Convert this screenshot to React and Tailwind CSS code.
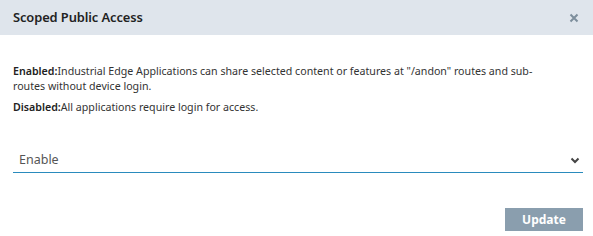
export default function App() {
    return (
        <div className="w-[593px] h-[236px] bg-white flex flex-col" style={{ fontFamily: '"Noto Sans", "Open Sans", sans-serif' }}>
            {/* Header */}
            <div className="h-[35px] bg-[#dfe5ec] flex items-center justify-between pl-[13px] pr-[14px]">
                <h1 className="text-[12.9px] font-semibold text-[#222] tracking-[-0.1px]">Scoped Public Access</h1>
                <svg className="w-[10px] h-[10px]" viewBox="0 0 10 10" fill="none" stroke="#7d8e9c" strokeWidth="2">
                    <path d="M1.5 1.5 L8.5 8.5 M8.5 1.5 L1.5 8.5" />
                </svg>
            </div>

            {/* Body */}
            <div className="pl-[13px] pr-[30px] pt-[29px] text-[10.65px] text-[#333] leading-[15px]">
                <p>
                    <span className="font-semibold text-[#222]">Enabled:</span>Industrial Edge Applications can share selected content or features at "/andon" routes and sub-routes without device login.
                </p>
                <p className="mt-[6px]">
                    <span className="font-semibold text-[#222]">Disabled:</span>All applications require login for access.
                </p>
            </div>

            {/* Select */}
            <div className="ml-[13px] mr-[10px] mt-[33px] h-[25px] border-b border-[#2a8bbd] flex items-center justify-between pl-[6px] pr-[3px]">
                <span className="text-[12.5px] text-[#555]">Enable</span>
                <svg className="w-[10px] h-[7px]" viewBox="0 0 10 7" fill="none" stroke="#444" strokeWidth="2">
                    <path d="M1.5 1.5 L5 5 L8.5 1.5" />
                </svg>
            </div>

            {/* Footer */}
            <div className="flex justify-end pr-[10px] mt-[35px]">
                <button className="w-[78px] h-[23px] bg-[#8a9eae] text-white text-[12px] font-bold">Update</button>
            </div>
        </div>
    );
}
